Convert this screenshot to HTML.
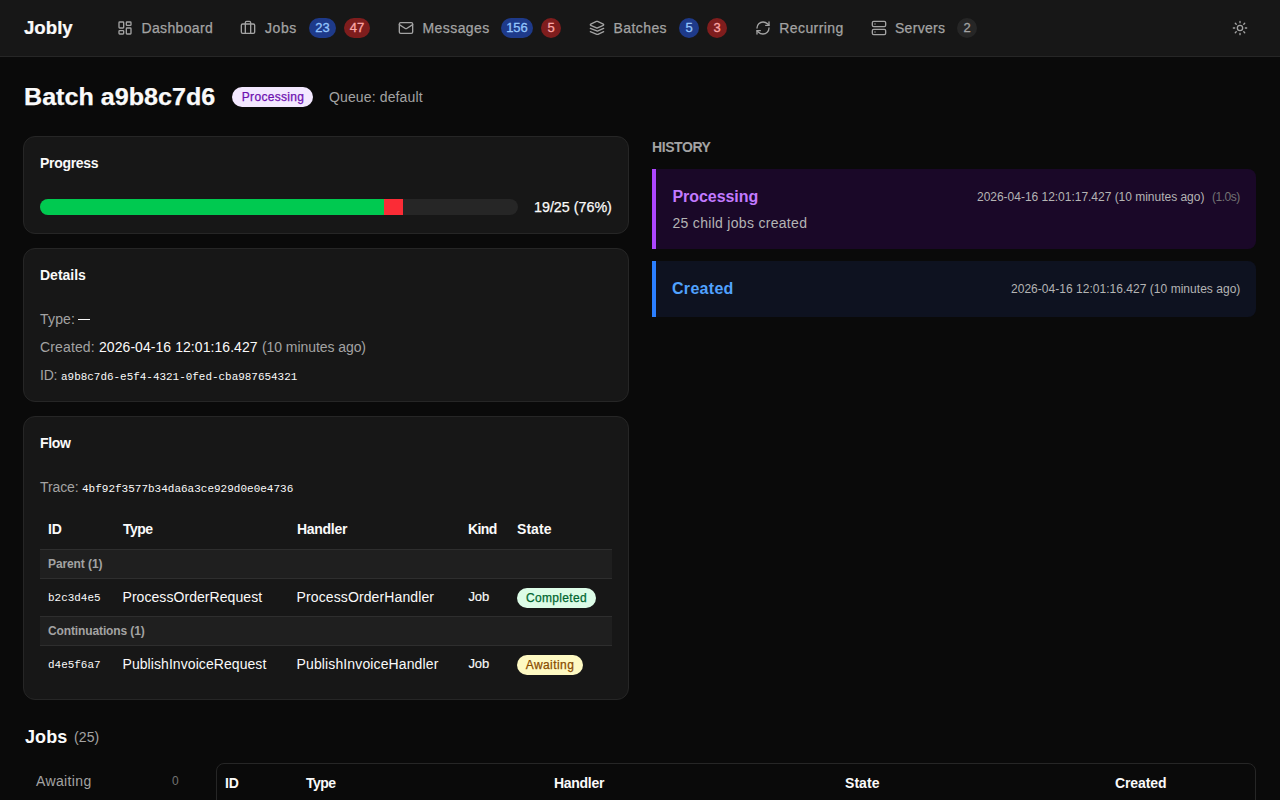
<!DOCTYPE html>
<html lang="en">
<head>
<meta charset="utf-8">
<title>Jobly - Batch a9b8c7d6</title>
<style>
*{box-sizing:border-box;margin:0;padding:0}
html,body{width:1280px;height:800px;overflow:hidden;background:#0a0a0a;color:#fafafa;font-family:"Liberation Sans",sans-serif;}
body{position:relative}
.abs{position:absolute;white-space:nowrap;line-height:1}
.mono{font-family:"Liberation Mono",monospace}
/* nav */
#nav{position:absolute;left:0;top:0;width:1280px;height:57px;background:#171717;border-bottom:1px solid #262626}
.nt{position:absolute;top:20px;font-size:14px;line-height:16px;color:#a3a3a3;white-space:nowrap;letter-spacing:.35px;-webkit-text-stroke:.25px #a3a3a3}
.ni{position:absolute;top:20px;width:16px;height:16px;stroke:#a3a3a3;fill:none;stroke-width:2;stroke-linecap:round;stroke-linejoin:round}
.bd{position:absolute;top:18px;height:20px;border-radius:10px;font-size:13px;line-height:20px;text-align:center;font-weight:400;-webkit-text-stroke:.3px currentColor}
.bb{background:#1e3a8a;color:#93c5fd}
.br{background:#7f1d1d;color:#fca5a5}
.bg{background:#262626;color:#a3a3a3}
/* cards */
.card{position:absolute;background:#171717;border:1px solid #262626;border-radius:12px}
.h3{font-size:14px;font-weight:700;color:#fafafa}
.mut{color:#a3a3a3}
.th{font-size:14px;font-weight:700;color:#fafafa}
.grp{position:absolute;left:40px;width:572px;background:#1f1f1f;border-top:1px solid #2e2e2e;border-bottom:1px solid #2e2e2e}
.pill{position:absolute;height:20px;border-radius:10px;font-size:12px;line-height:20px;text-align:center}
</style>
</head>
<body>
<div id="nav">
  <div class="abs" style="left:24px;top:20px;font-size:17.5px;font-weight:700;color:#fafafa;letter-spacing:0;transform:scaleX(1.065);transform-origin:0 0;-webkit-text-stroke:.2px #fafafa">Jobly</div>

  <svg class="ni" style="left:117px" viewBox="0 0 24 24"><rect x="3" y="3" width="7" height="9" rx="1"/><rect x="14" y="3" width="7" height="5" rx="1"/><rect x="14" y="12" width="7" height="9" rx="1"/><rect x="3" y="16" width="7" height="5" rx="1"/></svg>
  <div class="nt" style="left:141.5px">Dashboard</div>

  <svg class="ni" style="left:240px" viewBox="0 0 24 24"><path d="M16 20V4a2 2 0 0 0-2-2h-4a2 2 0 0 0-2 2v16"/><rect x="2" y="6" width="20" height="14" rx="2"/></svg>
  <div class="nt" style="left:265px;letter-spacing:.6px">Jobs</div>
  <div class="bd bb" style="left:309px;width:27px">23</div>
  <div class="bd br" style="left:344px;width:26px">47</div>

  <svg class="ni" style="left:398px" viewBox="0 0 24 24"><rect x="2" y="4" width="20" height="16" rx="2"/><path d="m22 7-8.97 5.7a1.94 1.94 0 0 1-2.06 0L2 7"/></svg>
  <div class="nt" style="left:422.5px;letter-spacing:.42px">Messages</div>
  <div class="bd bb" style="left:501px;width:32px">156</div>
  <div class="bd br" style="left:541px;width:20px">5</div>

  <svg class="ni" style="left:589px" viewBox="0 0 24 24"><path d="m12.83 2.18a2 2 0 0 0-1.66 0L2.6 6.08a1 1 0 0 0 0 1.83l8.58 3.91a2 2 0 0 0 1.66 0l8.58-3.9a1 1 0 0 0 0-1.83Z"/><path d="m22 12.5-8.58 3.91a2 2 0 0 1-1.66 0L2 12.5"/><path d="m22 17.5-8.58 3.91a2 2 0 0 1-1.66 0L2 17.5"/></svg>
  <div class="nt" style="left:613.5px;letter-spacing:.42px">Batches</div>
  <div class="bd bb" style="left:679px;width:20px">5</div>
  <div class="bd br" style="left:707px;width:20px">3</div>

  <svg class="ni" style="left:755px" viewBox="0 0 24 24"><path d="M3 12a9 9 0 0 1 9-9 9.75 9.75 0 0 1 6.74 2.74L21 8"/><path d="M21 3v5h-5"/><path d="M21 12a9 9 0 0 1-9 9 9.75 9.75 0 0 1-6.74-2.74L3 16"/><path d="M8 16H3v5"/></svg>
  <div class="nt" style="left:779.3px;letter-spacing:.4px">Recurring</div>

  <svg class="ni" style="left:871px" viewBox="0 0 24 24"><rect x="2" y="2" width="20" height="8" rx="2"/><rect x="2" y="14" width="20" height="8" rx="2"/><path d="M6 6h.01M6 18h.01"/></svg>
  <div class="nt" style="left:895px;letter-spacing:.28px">Servers</div>
  <div class="bd bg" style="left:957px;width:20px">2</div>

  <svg class="ni" style="left:1232px" viewBox="0 0 24 24"><circle cx="12" cy="12" r="4"/><path d="M12 2v2M12 20v2M4.93 4.93l1.41 1.41M17.66 17.66l1.41 1.41M2 12h2M20 12h2M6.34 17.66l-1.41 1.41M19.07 4.93l-1.41 1.41"/></svg>
</div>

<!-- title -->
<div class="abs" style="left:24px;top:86px;font-size:23px;font-weight:700;color:#fafafa;letter-spacing:0;transform:scaleX(1.092);transform-origin:0 0;-webkit-text-stroke:.25px #fafafa">Batch a9b8c7d6</div>
<div class="pill" style="left:232px;top:87px;width:81px;background:#f3e8ff;color:#6e11b0;letter-spacing:.3px;padding-left:1px;-webkit-text-stroke:.25px #6e11b0">Processing</div>
<div class="abs mut" style="left:329px;top:90px;font-size:14px;letter-spacing:.13px">Queue: default</div>

<!-- progress card -->
<div class="card" style="left:23px;top:136px;width:606px;height:98px"></div>
<div class="abs h3" style="left:40px;top:156px;letter-spacing:-.3px">Progress</div>
<div style="position:absolute;left:40px;top:199px;width:478px;height:16px;border-radius:8px;background:#262626;overflow:hidden">
  <div style="position:absolute;left:0;top:0;width:344px;height:16px;background:#00c950"></div>
  <div style="position:absolute;left:344px;top:0;width:19px;height:16px;background:#fb2c36"></div>
</div>
<div class="abs" style="left:534px;top:200px;font-size:14.3px;color:#fafafa;letter-spacing:0;-webkit-text-stroke:.25px #fafafa">19/25 (76%)</div>

<!-- details card -->
<div class="card" style="left:23px;top:248px;width:606px;height:154px"></div>
<div class="abs h3" style="left:40px;top:268px;letter-spacing:.0px">Details</div>
<div class="abs mut" style="left:40px;top:312px;font-size:14px;letter-spacing:.18px">Type:</div>
<div style="position:absolute;left:78px;top:319px;width:12px;height:1.4px;background:#fafafa"></div>
<div class="abs mut" style="left:40px;top:340px;font-size:14px;letter-spacing:.14px">Created:</div>
<div class="abs" style="left:99px;top:340px;font-size:14px;letter-spacing:.06px">2026-04-16 12:01:16.427</div>
<div class="abs mut" style="left:262px;top:340px;font-size:14px;letter-spacing:-.07px">(10 minutes ago)</div>
<div class="abs mut" style="left:40px;top:368px;font-size:14px;letter-spacing:-.2px">ID:</div>
<div class="abs mono" style="left:61px;top:372px;font-size:10.95px">a9b8c7d6-e5f4-4321-0fed-cba987654321</div>

<!-- flow card -->
<div class="card" style="left:23px;top:416px;width:606px;height:284px"></div>
<div class="abs h3" style="left:40px;top:436px;letter-spacing:-.3px">Flow</div>
<div class="abs mut" style="left:40px;top:480px;font-size:14px;letter-spacing:-.1px">Trace:</div>
<div class="abs mono" style="left:82px;top:484px;font-size:11px">4bf92f3577b34da6a3ce929d0e0e4736</div>
<div class="abs th" style="left:48px;top:522px;letter-spacing:-.2px">ID</div>
<div class="abs th" style="left:123px;top:522px;letter-spacing:-.53px">Type</div>
<div class="abs th" style="left:297px;top:522px;letter-spacing:-.3px">Handler</div>
<div class="abs th" style="left:468px;top:522px;letter-spacing:-.6px">Kind</div>
<div class="abs th" style="left:517px;top:522px;letter-spacing:.05px">State</div>

<div class="grp" style="top:549px;height:30px"></div>
<div class="abs" style="left:48px;top:558px;font-size:12px;font-weight:700;color:#a3a3a3;letter-spacing:-.1px">Parent (1)</div>
<div class="abs mono" style="left:48px;top:593px;font-size:10.95px">b2c3d4e5</div>
<div class="abs" style="left:122.5px;top:590px;font-size:14px;letter-spacing:.06px">ProcessOrderRequest</div>
<div class="abs" style="left:296.6px;top:590px;font-size:14px;letter-spacing:.11px">ProcessOrderHandler</div>
<div class="abs" style="left:468.5px;top:590px;font-size:13px;letter-spacing:-.15px;-webkit-text-stroke:.15px #fafafa">Job</div>
<div class="pill" style="left:517px;top:588px;width:79px;background:#dcfce7;color:#016630;letter-spacing:.31px;-webkit-text-stroke:.25px #016630">Completed</div>

<div class="grp" style="top:616px;height:30px"></div>
<div class="abs" style="left:48px;top:625px;font-size:12px;font-weight:700;color:#a3a3a3;letter-spacing:-.12px">Continuations (1)</div>
<div class="abs mono" style="left:48px;top:660px;font-size:10.95px">d4e5f6a7</div>
<div class="abs" style="left:122.5px;top:657px;font-size:14px;letter-spacing:.07px">PublishInvoiceRequest</div>
<div class="abs" style="left:296.6px;top:657px;font-size:14px;letter-spacing:.12px">PublishInvoiceHandler</div>
<div class="abs" style="left:468.5px;top:657px;font-size:13px;letter-spacing:-.15px;-webkit-text-stroke:.15px #fafafa">Job</div>
<div class="pill" style="left:517px;top:655px;width:66px;background:#fef9c2;color:#894b00;letter-spacing:.43px;-webkit-text-stroke:.25px #894b00">Awaiting</div>

<!-- history -->
<div class="abs" style="left:652px;top:140px;font-size:14px;font-weight:700;color:#a3a3a3;letter-spacing:-.42px">HISTORY</div>
<div style="position:absolute;left:652px;top:169px;width:604px;height:80px;background:#1a0828;border-left:4px solid #ad46ff;border-radius:0 8px 8px 0"></div>
<div class="abs" style="left:672.5px;top:189px;font-size:16px;font-weight:700;color:#c27aff;letter-spacing:-.06px">Processing</div>
<div class="abs" style="left:672.5px;top:216px;font-size:14px;color:#b4b4b4;letter-spacing:.3px">25 child jobs created</div>
<div class="abs" style="left:977px;top:191px;font-size:12px;color:#b4b4b4;letter-spacing:-.02px">2026-04-16 12:01:17.427 (10 minutes ago)</div>
<div class="abs" style="left:1212px;top:191px;font-size:12px;color:#737373;letter-spacing:-.5px">(1.0s)</div>

<div style="position:absolute;left:652px;top:261px;width:604px;height:56px;background:#0e1220;border-left:4px solid #2b7fff;border-radius:0 8px 8px 0"></div>
<div class="abs" style="left:672px;top:281px;font-size:16px;font-weight:700;color:#51a2ff;letter-spacing:.3px">Created</div>
<div class="abs" style="left:1011px;top:283px;font-size:12px;color:#b4b4b4;letter-spacing:.03px">2026-04-16 12:01:16.427 (10 minutes ago)</div>

<!-- jobs -->
<div class="abs" style="left:25px;top:728px;font-size:18px;font-weight:700;color:#fafafa;letter-spacing:.1px">Jobs</div>
<div class="abs mut" style="left:74px;top:730px;font-size:14px;letter-spacing:.1px">(25)</div>
<div class="abs mut" style="left:36px;top:774px;font-size:14px;letter-spacing:.37px">Awaiting</div>
<div class="abs" style="left:172px;top:775px;font-size:12px;color:#737373">0</div>
<div style="position:absolute;left:216px;top:763px;width:1040px;height:60px;border:1px solid #262626;border-radius:8px;background:#0a0a0a"></div>
<div class="abs th" style="left:225px;top:776px;letter-spacing:-.2px">ID</div>
<div class="abs th" style="left:306px;top:776px;letter-spacing:-.53px">Type</div>
<div class="abs th" style="left:554px;top:776px;letter-spacing:-.3px">Handler</div>
<div class="abs th" style="left:845px;top:776px;letter-spacing:.05px">State</div>
<div class="abs th" style="left:1115px;top:776px;letter-spacing:-.1px">Created</div>
</body>
</html>
